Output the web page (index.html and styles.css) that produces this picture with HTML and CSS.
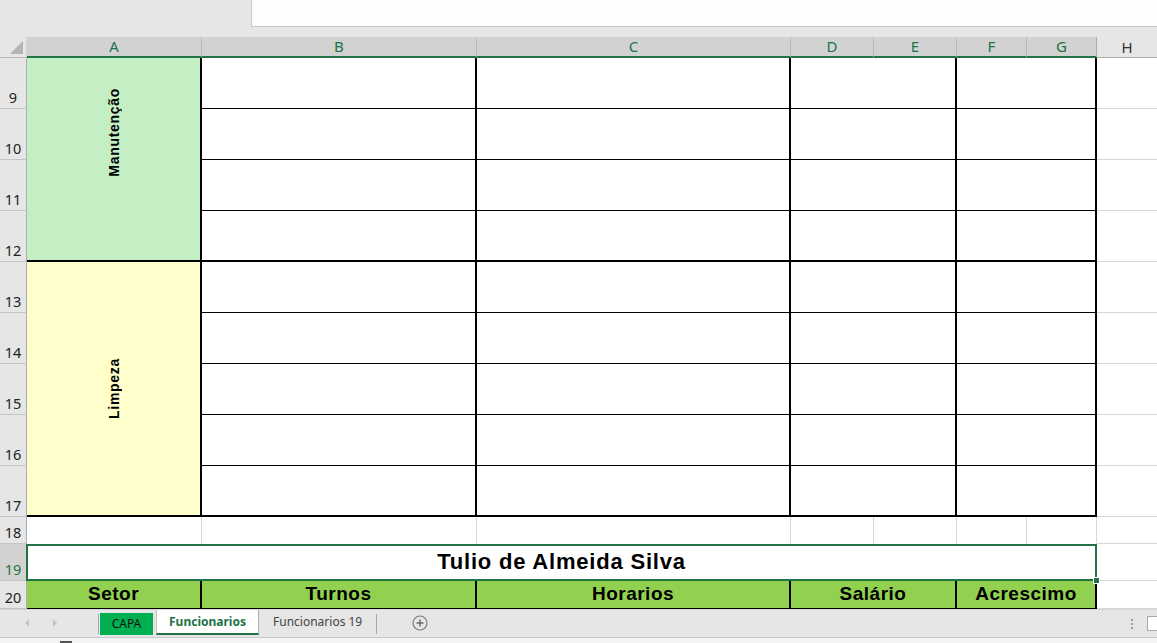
FILE: index.html
```html
<!DOCTYPE html>
<html lang="pt-BR">
<head>
    <meta charset="UTF-8">
    <meta name="viewport" content="width=device-width, initial-scale=1.0">
    <title>Funcionarios</title>
    <link rel="stylesheet" href="styles.css">
</head>
<body>
    <div class="formula">
        <div class="formula-box"></div>
    </div>

    <div class="sheet">
        <!-- column headers -->
        <div class="corner"><span class="corner-tri"></span></div>
        <div class="col-head sel">A</div>
        <div class="col-head sel">B</div>
        <div class="col-head sel">C</div>
        <div class="col-head sel">D</div>
        <div class="col-head sel">E</div>
        <div class="col-head sel">F</div>
        <div class="col-head sel last">G</div>
        <div class="col-head">H</div>

        <!-- rows 9 to 12 -->
        <div class="row-head">9</div>
        <div class="sector green"><span class="sector-name shift">Manutenção</span></div>
        <div class="tc"></div><div class="tc"></div><div class="tc span2"></div><div class="tc span2"></div><div class="hc"></div>
        <div class="row-head">10</div>
        <div class="tc"></div><div class="tc"></div><div class="tc span2"></div><div class="tc span2"></div><div class="hc"></div>
        <div class="row-head">11</div>
        <div class="tc"></div><div class="tc"></div><div class="tc span2"></div><div class="tc span2"></div><div class="hc"></div>
        <div class="row-head">12</div>
        <div class="tc thick"></div><div class="tc thick"></div><div class="tc span2 thick"></div><div class="tc span2 thick"></div><div class="hc"></div>

        <!-- rows 13 to 17 -->
        <div class="row-head">13</div>
        <div class="sector yellow"><span class="sector-name">Limpeza</span></div>
        <div class="tc"></div><div class="tc"></div><div class="tc span2"></div><div class="tc span2"></div><div class="hc"></div>
        <div class="row-head">14</div>
        <div class="tc"></div><div class="tc"></div><div class="tc span2"></div><div class="tc span2"></div><div class="hc"></div>
        <div class="row-head">15</div>
        <div class="tc"></div><div class="tc"></div><div class="tc span2"></div><div class="tc span2"></div><div class="hc"></div>
        <div class="row-head">16</div>
        <div class="tc"></div><div class="tc"></div><div class="tc span2"></div><div class="tc span2"></div><div class="hc"></div>
        <div class="row-head">17</div>
        <div class="tc thick"></div><div class="tc thick"></div><div class="tc span2 thick"></div><div class="tc span2 thick"></div><div class="hc"></div>

        <!-- row 18 -->
        <div class="row-head">18</div>
        <div class="gc"></div><div class="gc"></div><div class="gc"></div><div class="gc"></div>
        <div class="gc"></div><div class="gc"></div><div class="gc"></div><div class="hc"></div>

        <!-- row 19 -->
        <div class="row-head sel">19</div>
        <div class="title-cell">Tulio de Almeida Silva<span class="fill-handle"></span></div>
        <div class="hc"></div>

        <!-- row 20 -->
        <div class="row-head">20</div>
        <div class="head-cell">Setor</div>
        <div class="head-cell">Turnos</div>
        <div class="head-cell">Horarios</div>
        <div class="head-cell span2">Salário</div>
        <div class="head-cell span2">Acrescimo</div>
        <div class="hc"></div>
    </div>

    <div class="tabbar">
        <div class="tab-nav">
            <span class="arrow arrow-left"></span>
            <span class="arrow arrow-right"></span>
        </div>
        <span class="tab-sep"></span>
        <div class="tab tab-capa">CAPA</div>
        <div class="tab tab-active">Funcionarios</div>
        <div class="tab">Funcionarios 19</div>
        <span class="tab-sep"></span>
        <svg class="tab-add" width="16" height="16" viewBox="0 0 16 16">
            <circle cx="8" cy="8" r="7" fill="none" stroke="#7a7a7a" stroke-width="1.2"/>
            <path d="M8 4.5v7M4.5 8h7" stroke="#6a6a6a" stroke-width="1.4"/>
        </svg>
        <div class="tab-spacer"></div>
        <span class="tab-more"></span>
        <div class="scroll-box"></div>
    </div>

    <div class="status">
        <span class="status-icon"></span>
    </div>
</body>
</html>
```

FILE: styles.css
```css
* {
    margin: 0;
    padding: 0;
    box-sizing: border-box;
}

body {
    width: 1157px;
    height: 643px;
    overflow: hidden;
    background-color: #e6e6e6;
    font-family: 'Noto Sans', sans-serif;
    color: #222;
}

/* formula bar strip */
.formula {
    height: 37px;
    background-color: #e6e6e6;
}

.formula-box {
    margin-left: 251px;
    height: 27px;
    background-color: #fdfdfd;
    border-left: 1px solid #c6c6c6;
    border-bottom: 1px solid #c6c6c6;
}

/* grid */
.sheet {
    display: grid;
    grid-template-columns: 27px 175px 275px 314px 83px 83px 70px 70px 1fr;
    grid-template-rows: 21px repeat(9, 51px) 27px 37px 28px;
    background-color: #fff;
}

.corner {
    background-color: #e6e6e6;
    border-right: 1px solid #d0d0d0;
    border-bottom: 1px solid #b9b9b9;
    display: flex;
    justify-content: flex-end;
    align-items: flex-end;
    padding: 0 3px 3px 0;
}

.corner-tri {
    width: 13px;
    height: 13px;
    background-color: #b4b4b4;
    clip-path: polygon(100% 0, 100% 100%, 0 100%);
}

.col-head {
    background-color: #e6e6e6;
    border-bottom: 1px solid #ababab;
    font-size: 15px;
    line-height: 20px;
    text-align: center;
    color: #333;
}

.col-head.sel {
    background-color: #d2d2d2;
    border-right: 1px solid #b8b8b8;
    border-bottom: 2px solid #217346;
    color: #217346;
    line-height: 19px;
}

.col-head.last {
    border-right-color: #ababab;
}

.row-head {
    grid-column: 1;
    background-color: #e6e6e6;
    border-right: 1px solid #ababab;
    border-bottom: 1px solid #c4c4c4;
    font-size: 14.5px;
    line-height: 18px;
    text-align: center;
    display: flex;
    align-items: flex-end;
    justify-content: center;
    padding-bottom: 2px;
}

.row-head.sel {
    background-color: #d2d2d2;
    color: #217346;
}

/* merged sector cells in column A */
.sector {
    grid-row: span 4;
    border-right: 2px solid #000;
    border-bottom: 2px solid #000;
    display: flex;
    align-items: center;
    justify-content: center;
}

.sector.green {
    background-color: #c4efc5;
}

.sector.yellow {
    grid-row: span 5;
    background-color: #ffffcc;
}

.sector-name {
    writing-mode: vertical-rl;
    transform: rotate(180deg);
    font-family: 'Liberation Sans', Arial, sans-serif;
    font-weight: bold;
    font-size: 14px;
    letter-spacing: 0.7px;
    color: #000;
}

.sector-name.shift {
    margin-bottom: 54px;
}

/* table cells */
.tc {
    border-right: 2px solid #000;
    border-bottom: 1px solid #000;
}

.tc.thick {
    border-bottom-width: 2px;
}

.span2 {
    grid-column: span 2;
}

.hc {
    border-bottom: 1px solid #d8d8d8;
}

.gc {
    border-right: 1px solid #d8d8d8;
}

.title-cell {
    grid-column: span 7;
    position: relative;
    margin-left: -1px;
    border: 2px solid #217346;
    font-family: 'Liberation Sans', Arial, sans-serif;
    font-weight: bold;
    font-size: 22px;
    letter-spacing: 0.8px;
    color: #000;
    text-align: center;
    line-height: 31px;
}

.fill-handle {
    position: absolute;
    right: -5px;
    bottom: -5px;
    width: 7px;
    height: 7px;
    background-color: #217346;
    border: 1px solid #fff;
}

.head-cell {
    background-color: #92d050;
    border-right: 2px solid #000;
    border-bottom: 1px solid #000;
    font-family: 'Liberation Sans', Arial, sans-serif;
    font-weight: bold;
    font-size: 19px;
    letter-spacing: 0.5px;
    color: #000;
    text-align: center;
    line-height: 26px;
}

/* sheet tabs */
.tabbar {
    display: flex;
    align-items: flex-start;
    height: 28px;
    background-color: #e6e6e6;
    border-top: 1px solid #d6d6d6;
    font-size: 12px;
}

.tab-nav {
    width: 98px;
    height: 26px;
    display: flex;
    align-items: center;
    gap: 24px;
    padding-left: 25px;
}

.arrow {
    width: 0;
    height: 0;
    border-top: 4px solid transparent;
    border-bottom: 4px solid transparent;
}

.arrow-left {
    border-right: 4px solid #c4c4c4;
}

.arrow-right {
    border-left: 4px solid #c4c4c4;
}

.tab-sep {
    width: 1px;
    height: 20px;
    margin-top: 4px;
    background-color: #a8a8a8;
}

.tab {
    height: 24px;
    line-height: 23px;
    padding: 0 14px;
    color: #444;
}

.tab-capa {
    width: 53px;
    height: 22px;
    margin: 3px 0 0 1px;
    padding: 0;
    line-height: 21px;
    text-align: center;
    background-color: #00b050;
    color: #111;
}

.tab-active {
    width: 103px;
    height: 25px;
    margin-left: 3px;
    padding: 0;
    text-align: center;
    background-color: #fff;
    border-left: 1px solid #c8c8c8;
    border-right: 1px solid #b0b0b0;
    border-bottom: 2px solid #217346;
    color: #217346;
    font-weight: bold;
}

.tab-add {
    margin: 5px 0 0 35px;
}

.tab-spacer {
    flex: 1;
}

.tab-more {
    width: 2px;
    height: 11px;
    margin: 8px 14px 0 0;
    background: radial-gradient(circle, #9a9a9a 1px, transparent 1.2px) 0 0 / 2px 4px repeat-y;
}

.scroll-box {
    width: 10px;
    height: 15px;
    margin-top: 6px;
    background-color: #fff;
    border: 1px solid #a8a8a8;
    border-right: none;
}

/* status strip */
.status {
    height: 7px;
    background-color: #f3f3f3;
    border-top: 1px solid #c8c8c8;
    padding: 3px 0 0 60px;
}

.status-icon {
    display: block;
    width: 12px;
    height: 3px;
    border-top: 2px solid #555;
}
```
